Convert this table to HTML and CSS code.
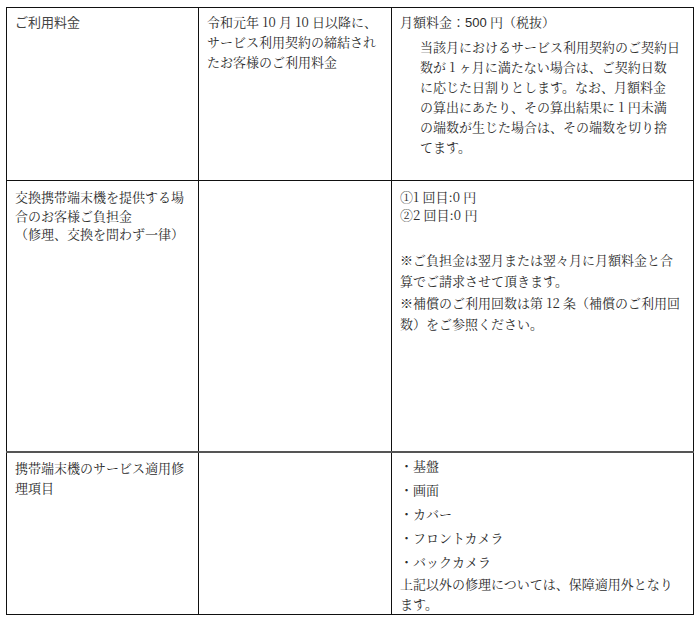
FILE: index.html
```html
<!DOCTYPE html>
<html lang="ja">
<head>
<meta charset="utf-8">
<link rel="stylesheet" href="styles.css">
</head>
<body>
<table class="terms">
  <colgroup>
    <col class="c1">
    <col class="c2">
    <col class="c3">
  </colgroup>
  <tr class="r1">
    <td class="gothic">ご利用料金</td>
    <td>令和元年 10 月 10 日以降に、<br>サービス利用契約の締結され<br>たお客様のご利用料金</td>
    <td>
      <p class="lead">月額料金：<span class="num">500</span> 円（税抜）</p>
      <p class="indent">当該月におけるサービス利用契約のご契約日<br>数が 1 ヶ月に満たない場合は、ご契約日数<br>に応じた日割りとします。なお、月額料金<br>の算出にあたり、その算出結果に 1 円未満<br>の端数が生じた場合は、その端数を切り捨<br>てます。</p>
    </td>
  </tr>
  <tr class="r2">
    <td class="tight">交換携帯端末機を提供する場<br>合のお客様ご負担金<br>（修理、交換を問わず一律）</td>
    <td></td>
    <td>
      <p class="tight">①1 回目:0 円<br>②2 回目:0 円</p>
      <p class="note">※ご負担金は翌月または翌々月に月額料金と合<br>算でご請求させて頂きます。</p>
      <p class="note">※補償のご利用回数は第 12 条（補償のご利用回<br>数）をご参照ください。</p>
    </td>
  </tr>
  <tr class="r3">
    <td class="head3">携帯端末機のサービス適用修<br>理項目</td>
    <td></td>
    <td>
      <ul class="items">
        <li>・基盤</li>
        <li>・画面</li>
        <li>・カバー</li>
        <li>・フロントカメラ</li>
        <li>・バックカメラ</li>
      </ul>
      <p class="tail">上記以外の修理については、保障適用外となり<br>ます。</p>
    </td>
  </tr>
</table>
</body>
</html>
```
FILE: styles.css
```css
html, body {
  margin: 0;
  padding: 0;
  background: #fff;
}
body {
  font-family: "Noto Serif CJK JP", "Liberation Serif", "Noto Sans CJK JP", serif;
  font-size: 13px;
  color: #2b2b2b;
}
.terms {
  margin: 7px 0 0 6px;
  border-collapse: collapse;
  table-layout: fixed;
  width: 687px;
}
.c1 { width: 192px; }
.c2 { width: 193px; }
.c3 { width: 302px; }
.terms td {
  border: 1.5px solid #111;
  vertical-align: top;
  padding: 4px 8px 0 8px;
  line-height: 20px;
  white-space: nowrap;
  overflow: hidden;
}
.terms td.gothic {
  font-family: "Noto Sans CJK JP", "Liberation Sans", sans-serif;
  color: #444;
}
.num {
  font-family: "Liberation Sans", "Noto Sans CJK JP", sans-serif;
}
.r1 td { height: 173px; box-sizing: border-box; }
.r2 td { height: 271px; box-sizing: border-box; padding-top: 7px; }
.r2 td.tight { line-height: 18.5px; }
.r3 td { height: 161px; box-sizing: border-box; padding-top: 1px; }
.r3 td.head3 { padding-top: 5px; }
.r2 { border-bottom: 2px solid #555; }
p { margin: 0; }
.indent { margin-top: 4px; padding-left: 20px; }
.tight { line-height: 18px; }
.note { margin-top: 25px; line-height: 21px; }
.note + .note { margin-top: 1px; }
.items { list-style: none; margin: 0; padding: 0; }
.items li { line-height: 24px; }
.tail { line-height: 20px; }
```
